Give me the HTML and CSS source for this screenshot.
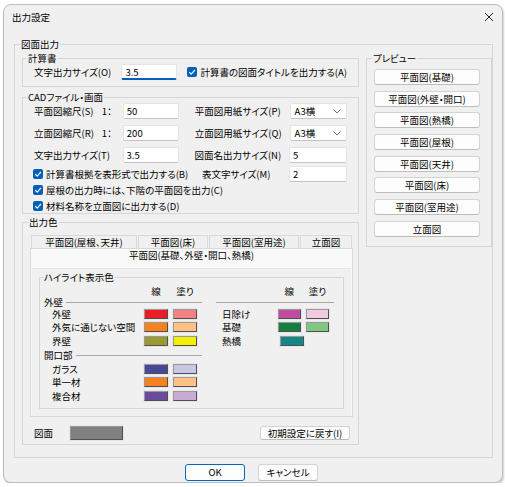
FILE: index.html
```html
<!DOCTYPE html>
<html lang="ja">

<head>
    <meta charset="UTF-8">
    <title>出力設定</title>
    <link rel="stylesheet" href="styles.css">
</head>

<body>
    <div class="window">
        <div class="titlebar">
            <span class="title">出力設定</span>
            <svg class="close" width="10" height="10" viewBox="0 0 10 10">
                <path d="M1 1L9 9M9 1L1 9" stroke="#222" stroke-width="1" fill="none" />
            </svg>
        </div>

        <div class="dlg_body">
            <fieldset class="group main_group">
                <legend>図面出力</legend>
                <div class="main_cols">
                    <div class="left_col">
                        <!-- 計算書 -->
                        <fieldset class="group calc_group">
                            <legend>計算書</legend>
                            <div class="row">
                                <label class="lbl lbl_w90">文字出力サイズ(O)</label>
                                <input type="text" class="field focused" value="3.5">
                                <label class="check calc_check"><span class="box"><svg width="10" height="10" viewBox="0 0 10 10"><path d="M2.2 5.2L4.2 7.2L7.9 3" stroke="#fff" stroke-width="1.2" fill="none" /></svg></span>計算書の図面タイトルを出力する(A)</label>
                            </div>
                        </fieldset>

                        <!-- CADファイル・画面 -->
                        <fieldset class="group cad_group">
                            <legend>CADファイル・画面</legend>
                            <div class="row">
                                <label class="lbl lbl_w90">平面図縮尺(S)<span class="ratio">1：</span></label>
                                <input type="text" class="field" value="50">
                                <label class="lbl lbl_w96">平面図用紙サイズ(P)</label>
                                <div class="combo">A3横<svg width="8" height="5" viewBox="0 0 8 5"><path d="M0.5 0.5L4 4L7.5 0.5" stroke="#666" stroke-width="0.9" fill="none" /></svg></div>
                            </div>
                            <div class="row gap6">
                                <label class="lbl lbl_w90">立面図縮尺(R)<span class="ratio">1：</span></label>
                                <input type="text" class="field" value="200">
                                <label class="lbl lbl_w96">立面図用紙サイズ(Q)</label>
                                <div class="combo">A3横<svg width="8" height="5" viewBox="0 0 8 5"><path d="M0.5 0.5L4 4L7.5 0.5" stroke="#666" stroke-width="0.9" fill="none" /></svg></div>
                            </div>
                            <div class="row gap6">
                                <label class="lbl lbl_w90">文字出力サイズ(T)</label>
                                <input type="text" class="field" value="3.5">
                                <label class="lbl lbl_w96">図面名出力サイズ(N)</label>
                                <input type="text" class="field field_wide" value="5">
                            </div>
                            <div class="row gap3">
                                <label class="check check_w170"><span class="box"><svg width="10" height="10" viewBox="0 0 10 10"><path d="M2.2 5.2L4.2 7.2L7.9 3" stroke="#fff" stroke-width="1.2" fill="none" /></svg></span>計算書根拠を表形式で出力する(B)</label>
                                <label class="lbl lbl_w88">表文字サイズ(M)</label>
                                <input type="text" class="field field_wide" value="2">
                            </div>
                            <div class="row row_check gap1">
                                <label class="check"><span class="box"><svg width="10" height="10" viewBox="0 0 10 10"><path d="M2.2 5.2L4.2 7.2L7.9 3" stroke="#fff" stroke-width="1.2" fill="none" /></svg></span>屋根の出力時には、下階の平面図を出力(C)</label>
                            </div>
                            <div class="row row_check gap2">
                                <label class="check"><span class="box"><svg width="10" height="10" viewBox="0 0 10 10"><path d="M2.2 5.2L4.2 7.2L7.9 3" stroke="#fff" stroke-width="1.2" fill="none" /></svg></span>材料名称を立面図に出力する(D)</label>
                            </div>
                        </fieldset>

                        <!-- 出力色 -->
                        <fieldset class="group color_group">
                            <legend>出力色</legend>
                            <div class="tab_row">
                                <span class="tab tab_w106">平面図(屋根、天井)</span>
                                <span class="tab tab_w70">平面図(床)</span>
                                <span class="tab tab_w90">平面図(室用途)</span>
                                <span class="tab tab_w52">立面図</span>
                            </div>
                            <div class="tab_page">
                                <div class="tab_title">平面図(基礎、外壁・開口、熱橋)</div>
                                <div class="page_body">
                                    <fieldset class="group hl_group">
                                        <legend>ハイライト表示色</legend>
                                        <div class="hl_cols">
                                            <div class="hl_col hl_left">
                                                <div class="hl_head"><span class="hl_lbl"></span><span class="hd">線</span><span class="hd">塗り</span></div>
                                                <div class="sect sect_first">外壁</div>
                                                <div class="hl_row"><span class="hl_lbl">外壁</span><span class="sw" style="background:#ec1c24"></span><span class="sw" style="background:#f28282"></span></div>
                                                <div class="hl_row"><span class="hl_lbl">外気に通じない空間</span><span class="sw" style="background:#f5821f"></span><span class="sw" style="background:#ffc184"></span></div>
                                                <div class="hl_row"><span class="hl_lbl">界壁</span><span class="sw" style="background:#9a9a32"></span><span class="sw" style="background:#f2f000"></span></div>
                                                <div class="sect">開口部</div>
                                                <div class="hl_row"><span class="hl_lbl">ガラス</span><span class="sw" style="background:#484898"></span><span class="sw" style="background:#c9c8e4"></span></div>
                                                <div class="hl_row"><span class="hl_lbl">単一材</span><span class="sw" style="background:#f5821f"></span><span class="sw" style="background:#ffc184"></span></div>
                                                <div class="hl_row"><span class="hl_lbl">複合材</span><span class="sw" style="background:#6b4c9c"></span><span class="sw" style="background:#c9acd6"></span></div>
                                            </div>
                                            <div class="hl_col hl_right">
                                                <div class="hl_head"><span class="hl_lbl"></span><span class="hd">線</span><span class="hd">塗り</span></div>
                                                <div class="sect sect_first"></div>
                                                <div class="hl_row"><span class="hl_lbl">日除け</span><span class="sw" style="background:#c04ca2"></span><span class="sw" style="background:#f2cae0"></span></div>
                                                <div class="hl_row"><span class="hl_lbl">基礎</span><span class="sw" style="background:#138040"></span><span class="sw" style="background:#80c882"></span></div>
                                                <div class="hl_row"><span class="hl_lbl">熱橋</span><span class="sw" style="background:#138888"></span></div>
                                            </div>
                                        </div>
                                    </fieldset>
                                </div>
                            </div>
                            <div class="drawing_row">
                                <span class="drawing_lbl">図面</span>
                                <span class="sw sw_big" style="background:#808080"></span>
                                <button type="button" class="btn reset_btn">初期設定に戻す(I)</button>
                            </div>
                        </fieldset>
                    </div>

                    <!-- プレビュー -->
                    <fieldset class="group preview_group">
                        <legend>プレビュー</legend>
                        <button type="button" class="btn pv_btn">平面図(基礎)</button>
                        <button type="button" class="btn pv_btn">平面図(外壁・開口)</button>
                        <button type="button" class="btn pv_btn">平面図(熱橋)</button>
                        <button type="button" class="btn pv_btn">平面図(屋根)</button>
                        <button type="button" class="btn pv_btn">平面図(天井)</button>
                        <button type="button" class="btn pv_btn">平面図(床)</button>
                        <button type="button" class="btn pv_btn">平面図(室用途)</button>
                        <button type="button" class="btn pv_btn">立面図</button>
                    </fieldset>
                </div>
            </fieldset>
        </div>

        <div class="footer">
            <button type="button" class="btn dlg_btn ok_btn">OK</button>
            <button type="button" class="btn dlg_btn">キャンセル</button>
        </div>
    </div>
</body>

</html>
```

FILE: styles.css
```css
html,
body {
    margin: 0;
    padding: 0;
    background: #fff;
}

body {
    font-family: "Noto Sans CJK JP", "Noto Sans", sans-serif;
    font-size: 9.5px;
    font-feature-settings: "palt";
    line-height: 12px;
    color: #000;
}

*,
*:before,
*:after {
    box-sizing: border-box;
}

/* window frame */
.window {
    display: flex;
    flex-direction: column;
    width: 500px;
    height: 479px;
    margin: 4px 0 0 3px;
    background: #f0f0f0;
    border: 1px solid #bcbcbc;
    border-radius: 8px;
    box-shadow: 1px 2px 2px rgba(0, 0, 0, 0.18);
}

.titlebar {
    display: flex;
    align-items: center;
    justify-content: space-between;
    height: 24px;
    padding: 0 8px;
}

.close {
    display: block;
}

.dlg_body {
    padding: 9px 9px 0 10px;
}

/* group boxes */
.group {
    margin: 0;
    min-width: 0;
    border: 1px solid #d6d6d6;
}

.group>legend {
    padding: 0 1px;
    line-height: 12px;
}

.main_group {
    padding: 2px 0 12px 7px;
}

.main_group>legend {
    margin-left: -2px;
}

.main_cols {
    display: flex;
    align-items: flex-start;
}

.left_col {
    width: 337px;
}

.calc_group {
    padding: 0 11px 6px 11px;
}

.calc_group>legend,
.cad_group>legend {
    margin-left: -7px;
}

.cad_group {
    margin-top: 4px;
    padding: 0 11px 0 11px;
}

.row {
    display: flex;
    align-items: center;
    height: 16px;
}

.row_check {
    height: 14px;
}

.gap6 {
    margin-top: 6px;
}

.gap3 {
    margin-top: 3px;
}

.gap2 {
    margin-top: 2px;
}

.gap1 {
    margin-top: 1px;
}

.lbl {
    display: flex;
    align-items: center;
    white-space: nowrap;
}

.lbl_w90 {
    width: 90px;
}

.lbl_w96 {
    width: 96px;
    margin-left: 16px;
}

.lbl_w88 {
    width: 88px;
}

.ratio {
    margin-left: auto;
    margin-right: 11px;
}

.field {
    width: 56px;
    height: 16px;
    margin: 0;
    padding: 0 3px;
    font: inherit;
    color: #000;
    background: #fff;
    border: 1px solid #e4e4e4;
    border-bottom-color: #c4c4c4;
    border-radius: 2px;
    outline: none;
}

.field.focused {
    border-bottom: 2px solid #005fb8;
}

.field_wide {
    width: 58px;
}

.combo {
    display: flex;
    align-items: center;
    justify-content: space-between;
    width: 58px;
    height: 16px;
    padding: 0 5px 0 4px;
    background: #fff;
    border: 1px solid #e4e4e4;
    border-bottom-color: #c4c4c4;
    border-radius: 2px;
}

.check {
    display: flex;
    align-items: center;
    white-space: nowrap;
    margin-left: -1px;
}

.calc_check {
    margin-left: 10px;
}

.check_w170 {
    width: 171px;
}

.check .box {
    display: flex;
    width: 10px;
    height: 10px;
    margin-right: 3px;
    background: #005fb8;
    border-radius: 2px;
}

/* 出力色 */
.color_group {
    margin-top: 2px;
    padding: 7px 5px 4px 7px;
}

.color_group>legend {
    margin-left: -2px;
}

.tab_row {
    display: flex;
    height: 13px;
    padding-left: 1px;
}

.tab {
    height: 13px;
    margin-right: 1px;
    text-align: center;
    line-height: 12px;
    background: #f0f0f0;
    border: 1px solid #d9d9d9;
    border-bottom: none;
}

.tab_w106 {
    width: 106px;
}

.tab_w70 {
    width: 70px;
}

.tab_w90 {
    width: 90px;
}

.tab_w52 {
    width: 52px;
}

.tab_page {
    width: 323px;
    background: #f9f9f9;
    border: 1px solid #d9d9d9;
}

.tab_title {
    height: 14px;
    text-align: center;
    line-height: 13px;
}

.page_body {
    margin: 5px 1px 0 1px;
    padding: 2px 7px 7px 7px;
    background: #f0f0f0;
    border-top: 1px solid #e6e6e6;
}

.hl_group {
    padding: 3px 9px 5px 4px;
}

.hl_group>legend {
    margin-left: -1px;
}

.hl_cols {
    display: flex;
}

.hl_left {
    width: 158px;
}

.hl_right {
    width: 118px;
    margin-left: 14px;
}

.hl_head,
.hl_row {
    display: flex;
    align-items: center;
}

.hl_head {
    height: 11px;
    line-height: 11px;
}

.hl_row {
    height: 13.5px;
    line-height: 12px;
}

.hl_left .hl_lbl {
    width: 100px;
    padding-left: 8px;
    white-space: nowrap;
}

.hl_right .hl_lbl {
    width: 64px;
    padding-left: 6px;
}

.hd {
    width: 24px;
    margin-right: 5px;
    text-align: center;
}

.sect {
    display: flex;
    align-items: center;
    height: 10px;
    line-height: 10px;
}

.sect:after {
    content: '';
    flex: 1;
    margin-left: 3px;
    border-top: 1px solid #a8a8a8;
}

.hl_right .sect:after {
    margin-left: 0;
}

.hl_left .sect:not(.sect_first) {
    height: 14px;
    margin-top: 0.5px;
}

.sw {
    display: block;
    width: 24px;
    height: 10px;
    margin-right: 5px;
    border: 1px solid #505050;
    border-top-color: #9a9a9a;
    border-left-color: #9a9a9a;
    box-shadow: 0 0 0 1px #e6e6e6;
}

.drawing_row {
    display: flex;
    align-items: center;
    height: 14px;
    margin-top: 9px;
    padding-left: 4px;
    padding-right: 3px;
}

.drawing_lbl {
    width: 36px;
}

.sw_big {
    width: 53px;
    height: 14px;
}

/* buttons */
.btn {
    margin: 0;
    padding: 0;
    font: inherit;
    color: #000;
    background: #fdfdfd;
    border: 1px solid #d3d3d3;
    border-bottom-color: #bdbdbd;
    border-radius: 3px;
    cursor: pointer;
}

.reset_btn {
    width: 90px;
    height: 14px;
    margin-left: auto;
    line-height: 12px;
}

.preview_group {
    width: 126px;
    margin-left: 7px;
    padding: 5px 11px 9px 7px;
}

.preview_group>legend {
    margin-left: -2px;
}

.pv_btn {
    display: block;
    width: 106px;
    height: 16px;
    margin-top: 5.7px;
    line-height: 14px;
}

.pv_btn:first-of-type {
    margin-top: 0;
}

.footer {
    display: flex;
    justify-content: center;
    gap: 13px;
    padding: 6px 3px 0 0;
}

.dlg_btn {
    width: 60px;
    height: 17px;
    line-height: 15px;
}

.ok_btn {
    border-color: #0067c0;
}
```
